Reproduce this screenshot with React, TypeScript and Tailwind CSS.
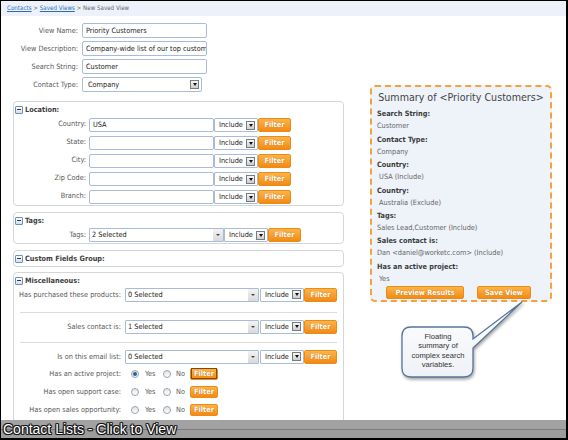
import React from "react";

const Minus = () => (
  <span className="inline-flex w-[8px] h-[8px] shrink-0 items-center justify-center rounded-[1px] border border-[#6f8fb8] bg-gradient-to-b from-white to-[#d3e0f0]">
    <span className="w-[4px] h-[1.5px] bg-[#1e3c6b]" />
  </span>
);

const DropBtn = () => (
  <span className="flex w-[9px] h-[9px] shrink-0 items-center justify-center border border-[#7b7b7b] bg-gradient-to-b from-[#f7f7f7] to-[#cdcdcd]">
    <span className="w-0 h-0 border-l-[2.5px] border-r-[2.5px] border-t-[3px] border-l-transparent border-r-transparent border-t-[#111]" />
  </span>
);

const TextBox = ({ className, value }: { className: string; value?: string }) => (
  <div
    className={`flex items-center overflow-hidden whitespace-nowrap rounded-[2px] border border-[#a9bcd5] bg-white px-[3px] text-[#222] ${className}`}
  >
    {value}
  </div>
);

const Include = () => (
  <div className="flex h-[14px] w-[44px] shrink-0 items-center justify-between rounded-[1px] border border-[#a9bcd5] bg-white pl-[4px] pr-[2px] text-[#222]">
    <span>Include</span>
    <DropBtn />
  </div>
);

const MultiSel = ({ className, value }: { className: string; value: string }) => (
  <div className={`flex h-[14px] shrink-0 items-stretch rounded-[1px] border border-[#a9bcd5] bg-white text-[#222] ${className}`}>
    <span className="flex flex-1 items-center pl-[2px]">{value}</span>
    <span className="flex w-[10px] items-center justify-center bg-gradient-to-b from-[#f3f3f3] to-[#d9d9d9]">
      <span className="w-0 h-0 border-l-[2px] border-r-[2px] border-t-[2.5px] border-l-transparent border-r-transparent border-t-[#444]" />
    </span>
  </div>
);

const FilterBtn = ({ className = "", focus = false }: { className?: string; focus?: boolean }) => (
  <div
    className={`flex shrink-0 items-center justify-center rounded-[2px] border border-[#ee8a16] bg-gradient-to-b from-[#fcb446] to-[#f28a10] font-bold text-white [text-shadow:0_0_1px_rgba(160,80,0,0.6)] ${className}`}
  >
    <span className={focus ? "border border-[#7a4a10] px-[2px] leading-[9px]" : ""}>Filter</span>
  </div>
);

const Radio = ({ checked = false, className = "" }: { checked?: boolean; className?: string }) => (
  <span
    className={`flex h-[8px] w-[8px] shrink-0 items-center justify-center rounded-full border border-[#9aa3ae] bg-gradient-to-b from-[#e4e4e4] to-white ${className}`}
  >
    {checked && <span className="h-[4px] w-[4px] rounded-full bg-[#2b5c9e]" />}
  </span>
);

const Fieldset = ({
  title,
  className,
  children,
}: {
  title: string;
  className: string;
  children?: React.ReactNode;
}) => (
  <div className={`ml-[12px] w-[331px] rounded-[4px] border border-[#d2d7dd] pt-[3px] ${className}`}>
    <div className="flex h-[9px] items-center gap-[2px] pl-[1px] font-bold text-[#3d3d3d]">
      <Minus />
      <span>{title}</span>
    </div>
    {children}
  </div>
);

const TopRow = ({ label, children }: { label: string; children: React.ReactNode }) => (
  <div className="flex h-[15px] items-center">
    <div className="w-[77px] text-right">{label}</div>
    <div className="ml-[4px] flex h-full">{children}</div>
  </div>
);

const LocRow = ({ label, value }: { label: string; value?: string }) => (
  <div className="flex h-[14px] items-start">
    <div className="w-[72px] pt-[1px] text-right leading-[9px]">{label}</div>
    <TextBox className="ml-[3px] h-[14px] w-[125px]" value={value} />
    <Include />
    <FilterBtn className="h-[14px] w-[33px]" />
  </div>
);

const MiscRow = ({ label, value, className = "" }: { label: string; value: string; className?: string }) => (
  <div className={`flex h-[13px] items-center ${className}`}>
    <div className="w-[107px] text-right">{label}</div>
    <MultiSel className="ml-[4px] w-[134px]" value={value} />
    <div className="ml-[1px]">
      <Include />
    </div>
    <FilterBtn className="h-[14px] w-[33px]" />
  </div>
);

const RadioRow = ({ label, yes = false, focus = false, className = "" }: { label: string; yes?: boolean; focus?: boolean; className?: string }) => (
  <div className={`flex h-[13px] items-center ${className}`}>
    <div className="w-[107px] text-right">{label}</div>
    <Radio checked={yes} className="ml-[10px]" />
    <span className="ml-[6px] w-[12px]">Yes</span>
    <Radio className="ml-[6px]" />
    <span className="ml-[5px] w-[14px]">No</span>
    <FilterBtn focus={focus} className="h-[12px] w-[28px]" />
  </div>
);

const summary: [string, string][] = [
  ["Search String:", "Customer"],
  ["Contact Type:", "Company"],
  ["Country:", "\u00a0USA (Include)"],
  ["Country:", "\u00a0Australia (Exclude)"],
  ["Tags:", "Sales Lead,Customer (Include)"],
  ["Sales contact is:", "Dan <daniel@worketc.com> (Include)"],
  ["Has an active project:", "\u00a0Yes"],
];

const OrangeBtn = ({ label, className }: { label: string; className: string }) => (
  <div
    className={`flex h-[13px] items-center justify-center rounded-[2px] border border-[#ee8a16] bg-gradient-to-b from-[#fcb446] to-[#f28a10] font-bold text-white [text-shadow:0_0_1px_rgba(160,80,0,0.6)] ${className}`}
  >
    {label}
  </div>
);

export default function App() {
  return (
    <div className="relative h-[440px] w-[568px] overflow-hidden border-b-2 border-l border-r-2 border-t border-black bg-white font-['DejaVu_Sans_Condensed','Liberation_Sans',sans-serif] text-[7.3px] leading-none text-[#575757]">
      {/* breadcrumb */}
      <div className="flex h-[15px] items-center whitespace-pre bg-[#edf2fa] pl-[6px] text-[6.2px] text-[#666]">
        <span className="text-[#2f6db5] underline">Contacts</span>
        <span> &gt; </span>
        <span className="text-[#2f6db5] underline">Saved Views</span>
        <span> &gt; New Saved View</span>
      </div>

      <div className="flex items-start">
        {/* left column */}
        <div className="w-[343px] shrink-0">
          <div className="flex flex-col gap-[3px] pt-[7px]">
            <TopRow label="View Name:">
              <TextBox className="w-[125px]" value="Priority Customers" />
            </TopRow>
            <TopRow label="View Description:">
              <TextBox className="w-[125px]" value="Company-wide list of our top customers" />
            </TopRow>
            <TopRow label="Search String:">
              <TextBox className="w-[125px]" value="Customer" />
            </TopRow>
            <TopRow label="Contact Type:">
              <div className="flex w-[120px] items-center justify-between rounded-[2px] border border-[#a9bcd5] bg-white pl-[5px] pr-[2px] text-[#222]">
                <span>Company</span>
                <DropBtn />
              </div>
            </TopRow>
          </div>

          <Fieldset title="Location:" className="mt-[9px] pb-[1px]">
            <div className="mt-[4px] flex flex-col gap-[4px]">
              <LocRow label="Country:" value="USA" />
              <LocRow label="State:" />
              <LocRow label="City:" />
              <LocRow label="Zip Code:" />
              <LocRow label="Branch:" />
            </div>
          </Fieldset>

          <Fieldset title="Tags:" className="mt-[6px] pb-[1px]">
            <div className="mt-[3px] flex h-[14px] items-center">
              <div className="w-[72px] text-right">Tags:</div>
              <MultiSel className="ml-[3px] w-[135px]" value="2 Selected" />
              <Include />
              <FilterBtn className="h-[14px] w-[33px]" />
            </div>
          </Fieldset>

          <Fieldset title="Custom Fields Group:" className="mt-[6px] pb-[3px]" />

          <Fieldset title="Miscellaneous:" className="mt-[5px] pb-[6px]">
            <MiscRow className="mt-[3px]" label="Has purchased these products:" value="0 Selected" />
            <div className="ml-[6px] mt-[11px] h-px w-[317px] bg-[#dcdcdc]" />
            <MiscRow className="mt-[7px]" label="Sales contact is:" value="1 Selected" />
            <div className="ml-[6px] mt-[9px] h-px w-[317px] bg-[#dcdcdc]" />
            <MiscRow className="mt-[7px]" label="Is on this email list:" value="0 Selected" />
            <div className="mt-[4px] flex flex-col gap-[5px]">
              <RadioRow label="Has an active project:" yes focus />
              <RadioRow label="Has open support case:" />
              <RadioRow label="Has open sales opportunity:" />
            </div>
          </Fieldset>
        </div>

        {/* summary */}
        <div className="ml-[26px] mt-[69px] w-[182px] rounded-[5px] border-2 border-dashed border-[#f7a03c] bg-[#eef2f9] pb-[1px] pt-[3px]">
          <div className="flex h-[14px] items-center justify-center text-[10.6px] text-[#444]">
            Summary of &lt;Priority Customers&gt;
          </div>
          <div className="mt-[4px] pl-[5px]">
            {summary.map(([l, v], i) => (
              <div key={i} className="mb-[1.4px]">
                <div className="flex h-[12px] items-center font-bold text-[#3c3c3c]">{l}</div>
                <div className="flex h-[12px] items-center whitespace-pre text-[#666]">{v}</div>
              </div>
            ))}
          </div>
          <div className="mt-[0.5px] flex gap-[13px] pl-[14px]">
            <OrangeBtn label="Preview Results" className="w-[78px]" />
            <OrangeBtn label="Save View" className="w-[54px]" />
          </div>
        </div>
      </div>

      {/* callout */}
      <svg
        className="absolute left-[396px] top-[297px] drop-shadow-[1px_2px_1.5px_rgba(0,0,0,0.35)]"
        width="134"
        height="84"
        viewBox="0 0 134 84"
      >
        <defs>
          <linearGradient id="cg" x1="0" y1="0" x2="0" y2="1">
            <stop offset="0" stopColor="#ffffff" />
            <stop offset="1" stopColor="#eef1f6" />
          </linearGradient>
        </defs>
        <path
          d="M14 29 H67 Q76 29 76 38 V41 L125 4 L76 50 V70 Q76 79 67 79 H14 Q5 79 5 70 V38 Q5 29 14 29 Z"
          fill="url(#cg)"
          stroke="#55759b"
          strokeWidth="1.3"
        />
      </svg>
      <div className="absolute left-[401px] top-[331px] w-[72px] text-center font-['Liberation_Sans',sans-serif] text-[7.6px] leading-[9.4px] text-[#333]">
        Floating
        <br />
        summary of
        <br />
        complex search
        <br />
        variables.
      </div>

      {/* bottom bar */}
      <div className="absolute bottom-0 left-0 right-0 flex h-[18px] items-center bg-[linear-gradient(to_bottom,#a2a2a2_0,#a2a2a2_9px,#7c7c7c_9px,#7c7c7c_10px,#9c9c9c_10px)] pl-[2px] font-['Liberation_Sans',sans-serif] text-[14px] leading-[18px] text-white [text-shadow:-1px_0_#111,1px_0_#111,0_-1px_#111,0_1px_#111,-1px_-1px_#333,1px_1px_#333,1px_-1px_#333,-1px_1px_#333]">
        Contact Lists - Click to View
      </div>
    </div>
  );
}
